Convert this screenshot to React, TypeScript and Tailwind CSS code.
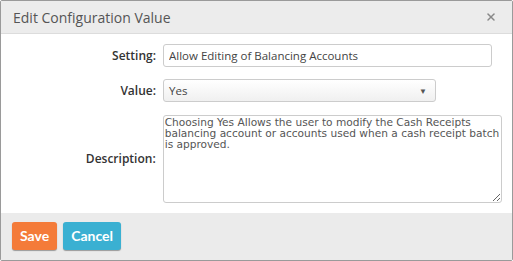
import { X } from "lucide-react";

export default function App() {
  return (
    <div className="w-[513px] h-[261px] bg-white border border-[#9a9a9a] rounded-[2px] flex flex-col font-['Open_Sans',sans-serif] text-[#333]">
      <div className="h-[33px] bg-[#ececec] border-b border-[#dcdcdc] flex items-center justify-between pl-[12px] pr-[15px]">
        <span className="text-[14px] text-[#555]">Edit Configuration Value</span>
        <X className="w-[12px] h-[12px] text-[#888]" strokeWidth={3} />
      </div>
      <div className="flex-1 flex flex-col pt-[10px] pr-[10px]">
        <div className="flex items-center">
          <label className="w-[158px] text-right text-[12px] font-semibold pr-[3px]">Setting:</label>
          <input
            readOnly
            value="Allow Editing of Balancing Accounts"
            className="w-[329px] h-[23px] ml-[4px] border border-[#ccc] rounded-[3px] px-[5px] text-[11.5px] text-[#444] outline-none"
          />
        </div>
        <div className="flex items-center mt-[12px]">
          <label className="w-[158px] text-right text-[12px] font-semibold pr-[3px]">Value:</label>
          <div className="w-[273px] h-[23px] ml-[4px] border border-[#ccc] rounded-[3px] px-[5px] text-[11.5px] text-[#444] bg-gradient-to-b from-white to-[#f0f0f0] flex items-center justify-between">
            <span>Yes</span>
            <span className="text-[8px] text-[#555] pr-[3px]">▼</span>
          </div>
        </div>
        <div className="flex items-center mt-[13px]">
          <label className="w-[158px] text-right text-[12px] font-semibold pr-[3px]">Description:</label>
          <textarea
            readOnly
            value="Choosing Yes Allows the user to modify the Cash Receipts balancing account or accounts used when a cash receipt batch is approved."
            className="w-[340px] h-[88px] ml-[4px] border border-[#ccc] rounded-[3px] pl-[1px] pr-0 pt-[1px] text-[10.6px] leading-[11px] text-[#555] font-['DejaVu_Sans',sans-serif] outline-none resize"
          />
        </div>
      </div>
      <div className="h-[47px] bg-[#ebebeb] flex items-center gap-[6px] px-[11px] pb-[2px]">
        <button className="h-[28px] px-[8px] bg-[#f47b39] text-white font-bold text-[14px] rounded-[3px] shadow-[0_1px_1px_#999] font-['Lato',sans-serif]">Save</button>
        <button className="h-[28px] px-[8px] bg-[#3ab0d2] text-white font-bold text-[14px] rounded-[3px] shadow-[0_1px_1px_#999] font-['Lato',sans-serif]">Cancel</button>
      </div>
    </div>
  );
}
